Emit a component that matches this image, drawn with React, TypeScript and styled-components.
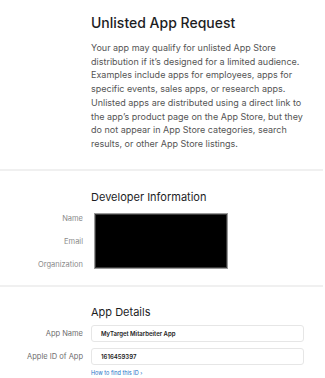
import styled, { createGlobalStyle } from "styled-components";

const GlobalStyle = createGlobalStyle`
  html, body {
    margin: 0;
    padding: 0;
    background: #ffffff;
  }
  body {
    font-family: Inter, "Noto Sans", "Liberation Sans", sans-serif;
    color: #1d1d1f;
  }
`;

const App = () => {
  return (
    <Page>
      <GlobalStyle />
      <Section $top={12} $bottom={18}>
        <Content>
          <Title>Unlisted App Request</Title>
          <Intro>
            Your app may qualify for unlisted App Store distribution if it’s
            designed for a limited audience. Examples include apps for
            employees, apps for specific events, sales apps, or research apps.
            Unlisted apps are distributed using a direct link to the app’s
            product page on the App Store, but they do not appear in App Store
            categories, search results, or other App Store listings.
          </Intro>
        </Content>
      </Section>
      <Divider />
      <Section $top={18} $bottom={9}>
        <Content>
          <SubTitle>Developer Information</SubTitle>
        </Content>
        <DevGrid>
          <Label>Name</Label>
          <Redacted />
          <Label>Email</Label>
          <Label>Organization</Label>
        </DevGrid>
      </Section>
      <Divider />
      <Section $top={17} $bottom={0}>
        <Content>
          <SubTitle>App Details</SubTitle>
        </Content>
        <FormGrid>
          <FieldLabel>App Name</FieldLabel>
          <Field>MyTarget Mitarbeiter App</Field>
          <FieldLabel>Apple ID of App</FieldLabel>
          <Field>1616459397</Field>
          <span />
          <HelpLink>How to find this ID ›</HelpLink>
        </FormGrid>
      </Section>
    </Page>
  );
};

const Page = styled.div`
  width: 325px;
  height: 378px;
  overflow: hidden;
  background: #ffffff;
`;

const Section = styled.section<{ $top: number; $bottom: number }>`
  padding: ${({ $top }) => $top}px 0 ${({ $bottom }) => $bottom}px 0;
`;

const Content = styled.div`
  margin-left: 91px;
  width: 212px;
`;

const Title = styled.h1`
  margin: 0 0 7px 0;
  font-size: 14px;
  line-height: 22px;
  font-weight: 500;
  color: #1d1d1f;
  letter-spacing: 0;
`;

const Intro = styled.p`
  margin: 0;
  font-size: 9px;
  line-height: 13.7px;
  color: #555555;
`;

const Divider = styled.div`
  height: 2px;
  margin-right: 2px;
  background: #f0f0f0;
`;

const SubTitle = styled.h2`
  margin: 0;
  font-size: 11px;
  line-height: 16px;
  font-weight: 400;
  color: #1d1d1f;
`;

const DevGrid = styled.div`
  display: grid;
  grid-template-columns: 83px 137px;
  grid-auto-rows: 23px;
  column-gap: 8px;
  margin-top: 2px;
`;

const Label = styled.div`
  grid-column: 1;
  text-align: right;
  font-size: 7.5px;
  line-height: 23px;
  color: #8a8a8a;
`;

const Redacted = styled.div`
  grid-column: 2;
  grid-row: 1 / span 3;
  margin: 6px 0 0 3px;
  width: 134px;
  height: 56px;
  box-sizing: border-box;
  background: #000000;
  border: 1px solid #9a9a9a;
  box-shadow: inset 0 0 0 1px #3a3a3a;
`;

const FormGrid = styled.div`
  display: grid;
  grid-template-columns: 83px 213px;
  column-gap: 8px;
  row-gap: 6px;
  margin-top: 5px;
  align-items: center;
`;

const FieldLabel = styled.div`
  text-align: right;
  font-size: 7.5px;
  color: #6e6e6e;
`;

const Field = styled.div`
  height: 17px;
  box-sizing: border-box;
  padding-left: 9px;
  border: 1px solid #e6e6e6;
  border-radius: 3px;
  font-size: 6px;
  font-weight: 600;
  line-height: 15px;
  color: #222222;
`;

const HelpLink = styled.a`
  margin-top: -2px;
  font-size: 5.5px;
  line-height: 8px;
  color: #1a73c8;
  text-decoration: none;
`;

export default App;
